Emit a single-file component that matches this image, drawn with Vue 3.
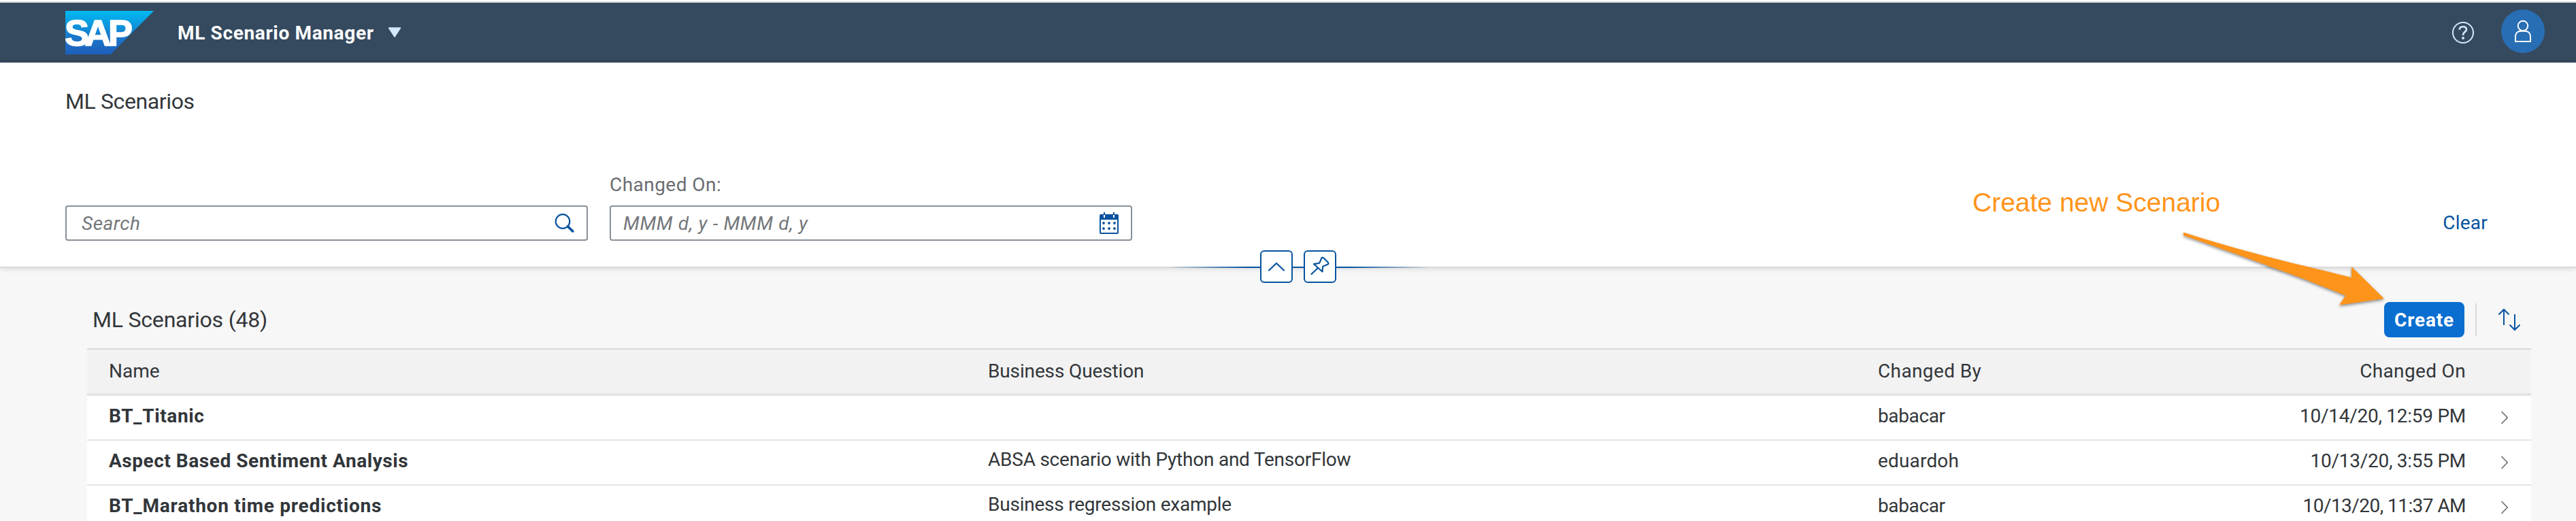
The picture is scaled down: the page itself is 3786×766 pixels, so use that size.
<script setup>
const rows = [
  { id: 1, name: 'BT_Titanic', question: '', by: 'babacar', on: '10/14/20, 12:59 PM', nameClass: 'n1', onClass: 'd1' },
  { id: 2, name: 'Aspect Based Sentiment Analysis', question: 'ABSA scenario with Python and TensorFlow', by: 'eduardoh', on: '10/13/20, 3:55 PM', nameClass: 'n2', byClass: 'by2', onClass: 'd2' },
  { id: 3, name: 'BT_Marathon time predictions', question: 'Business regression example', by: 'babacar', on: '10/13/20, 11:37 AM', nameClass: 'n3', onClass: 'd3' },
]
</script>

<template>
  <div class="page">
    <header class="shell">
      <svg class="logo" width="130" height="64" viewBox="0 0 130 64">
        <defs>
          <linearGradient id="logoFill" x1="0" y1="0" x2="0" y2="1">
            <stop offset="0" stop-color="#00b9f2" />
            <stop offset="0.25" stop-color="#0a9fe3" />
            <stop offset="0.6" stop-color="#1a77cb" />
            <stop offset="1" stop-color="#1e5fbb" />
          </linearGradient>
        </defs>
        <path d="M0 0H130L66.500 64H0Z" fill="url(#logoFill)" />
        <text x="-1 28.500 63" y="51" class="logo-text">SAP</text>
      </svg>
      <span class="app-title">ML Scenario Manager</span>
      <svg class="caret" width="20" height="16" viewBox="0 0 20 16">
        <path d="M1.500 1H18.500L10 14Z" fill="#d1e8ff" stroke="#d1e8ff" stroke-width="1.500" stroke-linejoin="round" />
      </svg>
      <div class="grow"></div>
      <svg class="help" width="34" height="34" viewBox="0 0 34 34" fill="none" stroke="#d1e8ff">
        <circle cx="17" cy="17" r="15" stroke-width="2" />
        <path d="M11.700 12.600C12 9.500 14.200 8.300 17 8.300C20 8.300 22 10 22 12.500C22 15.900 17 16 17 20.200V21" stroke-width="2.600" />
        <circle cx="17" cy="25" r="2" fill="#d1e8ff" stroke="none" />
      </svg>
      <div class="avatar">
        <svg width="64" height="64" viewBox="0 0 64 64" fill="none" stroke="#fff" stroke-width="2">
          <circle cx="32" cy="24" r="7.200" />
          <path d="M21 47V40C21 34.500 24.500 31.700 29 31.700H35C39.500 31.700 43 34.500 43 40V47Z" />
        </svg>
      </div>
    </header>

    <section class="panel">
      <h1 class="page-title">ML Scenarios</h1>
      <div class="filters">
        <div class="field">
          <div class="box search">
            <span class="ph ph-search">Search</span>
            <svg width="30" height="30" viewBox="0 0 30 30" fill="none" stroke="#0854a0">
              <circle cx="12" cy="12.500" r="10.300" stroke-width="2.200" />
              <path d="M19.500 20L26.800 27" stroke-width="3.800" stroke-linecap="round" />
            </svg>
          </div>
        </div>
        <div class="field">
          <label class="label">Changed On:</label>
          <div class="box date">
            <span class="ph ph-date">MMM d, y - MMM d, y</span>
            <svg width="30" height="34" viewBox="0 0 30 34">
              <path d="M3 4H27Q29 4 29 6V31Q29 33 27 33H3Q1 33 1 31V6Q1 4 3 4ZM3 12V31H27V12Z" fill="#0854a0" fill-rule="evenodd" />
              <path d="M8 1V7M22 1V7" stroke="#0854a0" stroke-width="2" />
              <path d="M8 5V9M22 5V9" stroke="#fff" stroke-width="2" />
              <g fill="#0854a0">
                <circle cx="7" cy="17" r="1.900" /><circle cx="15" cy="17" r="1.900" /><circle cx="23" cy="17" r="1.900" />
                <circle cx="7" cy="25" r="1.900" /><circle cx="15" cy="25" r="1.900" /><circle cx="23" cy="25" r="1.900" />
              </g>
            </svg>
          </div>
        </div>
        <a class="clear">Clear</a>
      </div>
      <div class="handle">
        <div class="hbtn">
          <svg width="44" height="44" viewBox="0 0 44 44" fill="none" stroke="#0854a0" stroke-width="2.200" stroke-linecap="round" stroke-linejoin="round">
            <path d="M11 27.500L22 17L33 27.500" />
          </svg>
        </div>
        <div class="hbtn">
          <svg width="44" height="44" viewBox="0 0 44 44" fill="none" stroke="#0854a0" stroke-width="2.200" stroke-linecap="round" stroke-linejoin="round">
            <path d="M9.500 33L18.300 24.500M24.300 9.500Q25.800 7.800 27.300 9.300L34 16Q35 17.500 33.500 18.700L26.500 21.500Q25.600 22 26 23.500L25.500 29.500L13 18.200L20 17.200Q21.400 17 21.800 15.500Z" />
          </svg>
        </div>
      </div>
    </section>

    <main class="content">
      <div class="toolbar">
        <h2 class="table-title">ML Scenarios (48)</h2>
        <div class="grow"></div>
        <button class="create">Create</button>
        <i class="sep"></i>
        <svg class="sort" width="34" height="34" viewBox="0 0 34 34" fill="none" stroke="#0854a0" stroke-width="2">
          <path d="M9 25V2.500M1.500 9.500L9 2L16.500 9.500M25 9V31.500M17.500 24.500L25 32L32.500 24.500" />
        </svg>
      </div>
      <div class="table">
        <div class="row head">
          <span class="cell h-name">Name</span>
          <span class="cell h-question">Business Question</span>
          <span class="cell h-by">Changed By</span>
          <span class="cell on h-on">Changed On</span>
        </div>
        <div v-for="r in rows" :key="r.id" class="row">
          <span class="cell name" :class="r.nameClass">{{ r.name }}</span>
          <span class="cell question">{{ r.question }}</span>
          <span class="cell by" :class="r.byClass">{{ r.by }}</span>
          <span class="cell on" :class="r.onClass">{{ r.on }}</span>
          <svg class="chev" width="12" height="20" viewBox="0 0 12 20" fill="none" stroke="#6a6d70" stroke-width="1.600">
            <path d="M1.500 1L10.200 10L1.500 19" />
          </svg>
        </div>
      </div>
    </main>

    <div class="note">Create new Scenario</div>
    <svg class="arrow" width="320" height="130" viewBox="3200 330 320 130">
      <path d="M3212 342.500C3260 358 3310 372 3362 385C3395 393 3425 400 3456 408V392L3504 439L3438 448.500L3447.500 434.500C3415 422 3385 409 3350 397C3300 378 3255 362 3210 346.500Q3207.500 343.500 3209.500 342Z" fill="#ff941a" />
    </svg>
  </div>
</template>

<style>
body { margin: 0; overflow: hidden; }
</style>

<style scoped>
.page {
  position: relative;
  width: 3786px;
  height: 766px;
  overflow: hidden;
  background: #f7f7f7;
  color: #32363a;
  font-family: Roboto, "Noto Sans", sans-serif;
  font-size: 28px;
}
.page::before { content: ""; display: block; height: 2px; background: #fff; }
.page * { box-sizing: border-box; }
.grow { flex: 1; }
.shell {
  display: flex;
  align-items: center;
  height: 90px;
  padding: 0 46px 0 96px;
  border-top: 2px solid #d9dadb;
  background: #354a5f;
}
.logo { display: block; }
.logo-text {
  font: bold 54px "Liberation Sans", Arial, sans-serif;
  fill: #fff;
  stroke: #fff;
  stroke-width: 1.5px;
}
.app-title { margin-left: 35px; font-weight: bold; color: #fff; letter-spacing: 0.65px; white-space: nowrap; }
.caret { margin-left: 20px; }
.help { margin-right: 39px; }
.avatar { width: 64px; height: 64px; margin-bottom: 4px; border-radius: 50%; background: #286eb4; }
.avatar svg { display: block; }
.panel {
  position: relative;
  height: 302px;
  padding: 0 96px;
  background: #fff;
  border-bottom: 2px solid #d9d9d9;
  box-shadow: 0 1px 8px rgba(0, 0, 0, 0.13);
}
.page-title { margin: 0; height: 114px; line-height: 114px; font-size: 32px; font-weight: 400; letter-spacing: -0.39px; }
.filters { display: flex; align-items: flex-end; gap: 32px; height: 148px; }
.field { width: 768px; }
.label { display: block; height: 60px; line-height: 60px; color: #6a6d70; letter-spacing: 0.46px; }
.box {
  display: flex;
  align-items: center;
  justify-content: space-between;
  height: 52px;
  border: 2px solid #89919a;
  border-radius: 4px;
  background: #fff;
}
.search { padding: 0 17px 0 22px; }
.date { padding: 0 17px 0 18px; }
.ph { color: #74777a; font-style: italic; white-space: nowrap; }
.ph-search { letter-spacing: 0.5px; }
.ph-date { letter-spacing: 0.71px; }
.clear { margin-left: auto; margin-right: 34px; height: 52px; line-height: 52px; color: #0854a0; letter-spacing: 0.22px; }
.handle {
  position: absolute;
  left: 1716px;
  top: 276px;
  width: 384px;
  height: 48px;
  display: flex;
  justify-content: center;
  gap: 16px;
  background: linear-gradient(to right, transparent, #0854a0 30%, #0854a0 70%, transparent) 0 24px / 100% 2px no-repeat;
}
.hbtn { width: 48px; height: 48px; border: 2px solid #0854a0; border-radius: 6px; background: #fff; }
.hbtn svg { display: block; }
.content { padding: 34px 66px 0 128px; }
.toolbar { display: flex; align-items: center; height: 84px; padding: 0 15px 0 8px; }
.table-title { margin: 0; font-size: 32px; font-weight: 400; letter-spacing: -0.2px; }
.create {
  width: 118px;
  height: 52px;
  padding: 0;
  border: 0;
  border-radius: 8px;
  background: #0a6ed1;
  color: #fff;
  font: bold 28px Roboto, sans-serif;
  letter-spacing: 0.82px;
}
.sep { width: 2px; height: 48px; margin: 0 31px 0 16px; background: #d9d9d9; }
.table { border-top: 2px solid #d9d9d9; }
.row {
  display: grid;
  grid-template-columns: 1292px 1308px 500px 364px 1fr;
  align-items: center;
  height: 66px;
  padding-left: 32px;
  border-bottom: 2px solid #e4e4e4;
  background: #fff;
}
.head { height: 68px; border-bottom: 4px solid #e4e4e4; background: #f2f2f2; }
.cell { white-space: nowrap; line-height: 60px; padding-bottom: 4px; }
.head .cell { padding-bottom: 0; }
.question { padding-bottom: 8px; line-height: 56px; letter-spacing: -0.23px; }
.h-question { letter-spacing: -0.14px; }
.h-by { letter-spacing: 0.38px; }
.h-on { letter-spacing: 0.34px; }
.name { font-weight: bold; }
.n1 { letter-spacing: 0.63px; }
.n2 { letter-spacing: 0.54px; }
.n3 { letter-spacing: 0.76px; }
.by { letter-spacing: -0.38px; }
.by2 { letter-spacing: 0.17px; }
.on { text-align: right; }
.d1 { letter-spacing: -0.27px; }
.d2 { letter-spacing: -0.27px; }
.d3 { letter-spacing: -0.55px; }
.chev { margin-left: 51px; }
.note {
  position: absolute;
  left: 2899px;
  top: 278px;
  font: 39px/40px "Liberation Sans", Arial, sans-serif;
  color: #ff941a;
  white-space: nowrap;
}
.arrow { position: absolute; left: 3200px; top: 330px; filter: drop-shadow(0 2px 2px rgba(0, 0, 0, 0.45)); }
</style>
